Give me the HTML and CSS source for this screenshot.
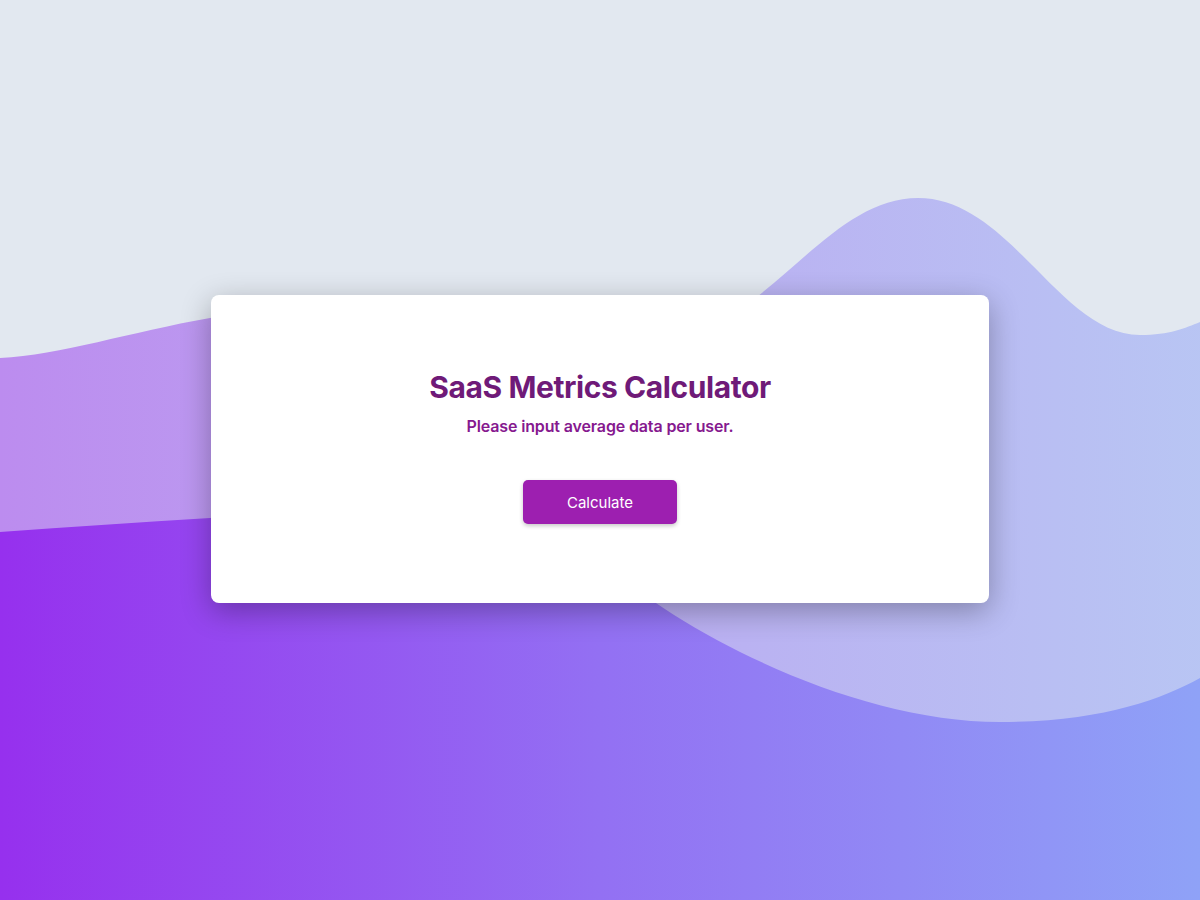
FILE: index.html
```html
<!DOCTYPE html>
<html lang="en">
<head>
<meta charset="utf-8">
<title>SaaS Metrics Calculator</title>
<link rel="stylesheet" href="styles.css">
</head>
<body>
<div class="page">
  <svg class="waves" viewBox="0 0 1200 900" preserveAspectRatio="none" aria-hidden="true">
    <defs>
      <linearGradient id="wg" x1="0" y1="0" x2="1" y2="0">
        <stop offset="0" stop-color="#9630ee"/>
        <stop offset="0.5" stop-color="#9370f3"/>
        <stop offset="1" stop-color="#8fa2f7"/>
      </linearGradient>
    </defs>
    <path class="wave-back" fill="url(#wg)" d="M0,358 C60,355 130,332 210,318 C300,302 520,345 640,345 C760,345 820,198 918,198 C1010,198 1060,335 1140,335 C1170,335 1185,328 1200,322 L1200,900 L0,900 Z"/>
    <path class="wave-front" fill="url(#wg)" d="M0,532 C70,527 140,522 210,518 C300,506 510,480 600,560 C690,640 860,722 1000,722 C1100,722 1160,700 1200,678 L1200,900 L0,900 Z"/>
  </svg>
  <main class="card">
    <h1 class="title">SaaS Metrics Calculator</h1>
    <p class="subtitle">Please input average data per user.</p>
    <button class="btn" type="button">Calculate</button>
  </main>
</div>
</body>
</html>
```

FILE: styles.css
```css
* { box-sizing: border-box; }
html, body { margin: 0; padding: 0; }
body {
  font-family: Inter, "Noto Sans", "Liberation Sans", sans-serif;
  background: #e2e8f0;
}
.page {
  position: relative;
  width: 1200px;
  height: 900px;
  overflow: hidden;
  display: flex;
  align-items: center;
  justify-content: center;
}
.waves {
  position: absolute;
  left: 0;
  top: 0;
  width: 1200px;
  height: 900px;
}
.wave-back { opacity: 0.5; }
.card {
  position: relative;
  width: 778px;
  height: 308px;
  margin-top: -2px;
  background: #ffffff;
  border-radius: 8px;
  box-shadow: 0 8px 30px rgba(0, 0, 0, 0.3);
  display: flex;
  flex-direction: column;
  align-items: center;
  padding-top: 74px;
}
.title {
  margin: 0;
  font-size: 30px;
  line-height: 36px;
  font-weight: 700;
  color: #6f1a78;
  letter-spacing: -0.42px;
}
.subtitle {
  margin: 9px 0 0;
  font-size: 16px;
  line-height: 24px;
  font-weight: 600;
  color: #86198f;
  letter-spacing: -0.14px;
}
.btn {
  margin-top: 42px;
  width: 154px;
  height: 44px;
  border: none;
  border-radius: 5px;
  background: #9d1fb0;
  color: #ffffff;
  font-family: Inter, "Noto Sans", "Liberation Sans", sans-serif;
  font-size: 15px;
  font-weight: 400;
  box-shadow: 0 2px 4px rgba(0, 0, 0, 0.22);
}
```
